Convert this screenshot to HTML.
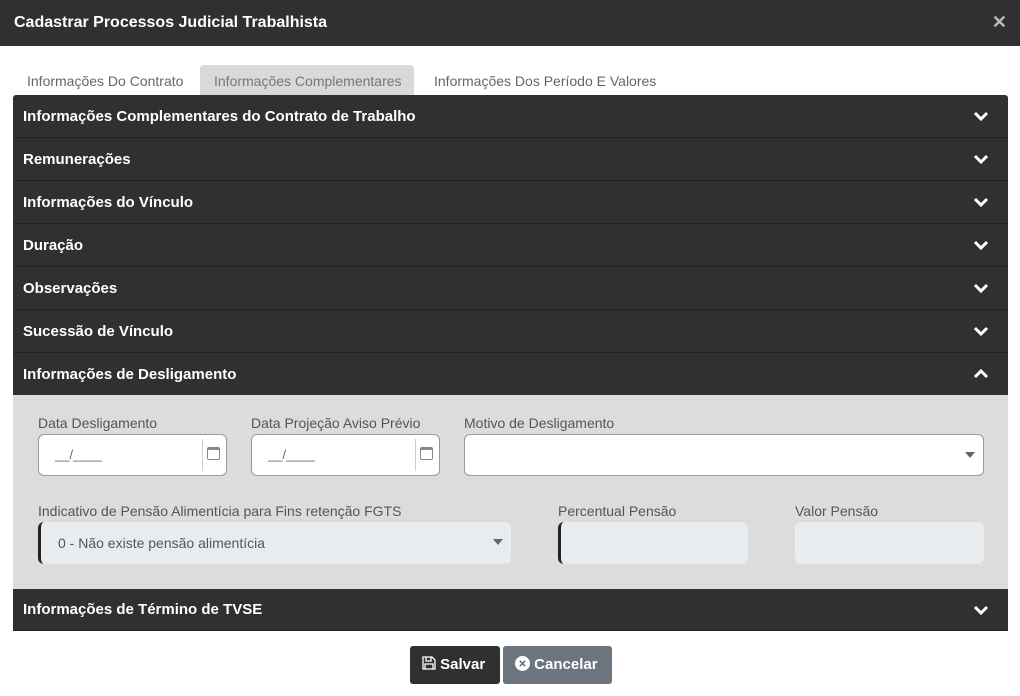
<!DOCTYPE html>
<html><head><meta charset="utf-8"><style>
*{box-sizing:border-box;margin:0;padding:0}
body{width:1020px;height:696px;background:#fff;font-family:"Liberation Sans",Arial,sans-serif;position:relative;overflow:hidden}
.hdr{position:absolute;left:0;top:0;width:1020px;height:46px;background:#303030;color:#fff;font-weight:bold;font-size:16px;padding:14px 0 0 14px}
.x{position:absolute;right:13px;top:12px;color:#bbb;font-size:18px;font-weight:bold}
.tab{position:absolute;top:65px;height:30px;font-size:14px;color:#666;padding-top:8px}
.acc{position:absolute;left:13px;width:995px;background:#303030;color:#fff;font-weight:bold;font-size:15px;padding-left:10px;border-bottom:1px solid #222}
.acc svg{position:absolute;right:19px;top:16px}
.panel{position:absolute;left:13px;top:395px;width:995px;height:194px;background:#dcdcdc}
.lbl{position:absolute;font-size:14px;color:#555}
.in{position:absolute;height:42px;background:#fff;border:1px solid #999;border-radius:6px}
.dis{position:absolute;height:42px;background:#e9ecef;border-radius:6px}
.btn{position:absolute;top:646px;height:38px;border-radius:3px;color:#fff;font-weight:bold;font-size:15px;padding-top:10px}
</style></head><body>
<div class="hdr">Cadastrar Processos Judicial Trabalhista<span class="x">✕</span></div>
<div class="tab" style="left:27px">Informações Do Contrato</div>
<div class="tab" style="left:200px;width:214px;background:#d9d9d9;border-radius:4px 4px 0 0;padding-left:14px;color:#777">Informações Complementares</div>
<div class="tab" style="left:434px">Informações Dos Período E Valores</div>
<div id="rows"></div>
<script>
var t=["Informações Complementares do Contrato de Trabalho","Remunerações","Informações do Vínculo","Duração","Observações","Sucessão de Vínculo","Informações de Desligamento"];
var h="";
var dn='<svg width="16" height="10" viewBox="0 0 16 10"><path d="M2 2l6 6 6-6" stroke="#fff" stroke-width="3" fill="none"/></svg>';
var up='<svg width="16" height="10" viewBox="0 0 16 10"><path d="M2 8l6-6 6 6" stroke="#fff" stroke-width="3" fill="none"/></svg>';
t.forEach(function(s,i){h+='<div class="acc" style="top:'+(95+i*43)+'px;height:43px;padding-top:13px;'+(i==0?'border-radius:3px 3px 0 0;':'')+'">'+s+(i==6?up:dn)+'</div>';});
h+='<div class="acc" style="top:589px;height:42px;padding-top:12px">Informações de Término de TVSE'+dn+'</div>';
document.getElementById('rows').innerHTML=h;
</script>
<div class="panel"></div>
<div class="lbl" style="left:38px;top:415px">Data Desligamento</div>
<div class="lbl" style="left:251px;top:415px">Data Projeção Aviso Prévio</div>
<div class="lbl" style="left:464px;top:415px">Motivo de Desligamento</div>
<div class="in" style="left:38px;top:434px;width:189px"><span style="position:absolute;left:16px;top:12px;font-size:13px;color:#666">__/____</span><div style="position:absolute;left:163px;top:4px;width:1px;height:32px;background:#ccc"></div><span style="position:absolute;left:168px;top:12px;width:13px;height:13px;border:1.5px solid #888;border-top-width:3px;border-radius:2px"></span></div>
<div class="in" style="left:251px;top:434px;width:189px"><span style="position:absolute;left:16px;top:12px;font-size:13px;color:#666">__/____</span><div style="position:absolute;left:163px;top:4px;width:1px;height:32px;background:#ccc"></div><span style="position:absolute;left:168px;top:12px;width:13px;height:13px;border:1.5px solid #888;border-top-width:3px;border-radius:2px"></span></div>
<div class="in" style="left:464px;top:434px;width:520px"><span style="position:absolute;right:8px;top:17px;border:5px solid transparent;border-top:6px solid #666"></span></div>
<div class="lbl" style="left:38px;top:503px">Indicativo de Pensão Alimentícia para Fins retenção FGTS</div>
<div class="lbl" style="left:558px;top:503px">Percentual Pensão</div>
<div class="lbl" style="left:795px;top:503px">Valor Pensão</div>
<div class="dis" style="left:38px;top:522px;width:473px;border-left:3px solid #222"><span style="position:absolute;left:17px;top:13px;font-size:14px;color:#555">0 - Não existe pensão alimentícia</span><span style="position:absolute;right:8px;top:17px;border:5px solid transparent;border-top:6px solid #666"></span></div>
<div class="dis" style="left:558px;top:522px;width:190px;border-left:3px solid #222"></div>
<div class="dis" style="left:795px;top:522px;width:189px"></div>
<div class="btn" style="left:410px;width:90px;background:#303030;padding-left:12px"><svg width="14" height="14" viewBox="0 0 14 14" style="vertical-align:-1px"><path d="M1 1h9l3 3v9H1z M4 1v4h5V1 M3 13V8h8v5" stroke="#fff" stroke-width="1.3" fill="none"/></svg> Salvar</div>
<div class="btn" style="left:503px;width:109px;background:#6c757d;padding-left:12px"><svg width="15" height="15" viewBox="0 0 14 14" style="vertical-align:-2px"><circle cx="7" cy="7" r="7" fill="#fff"/><path d="M4.5 4.5l5 5M9.5 4.5l-5 5" stroke="#6c757d" stroke-width="1.6"/></svg> Cancelar</div>
</body></html>
